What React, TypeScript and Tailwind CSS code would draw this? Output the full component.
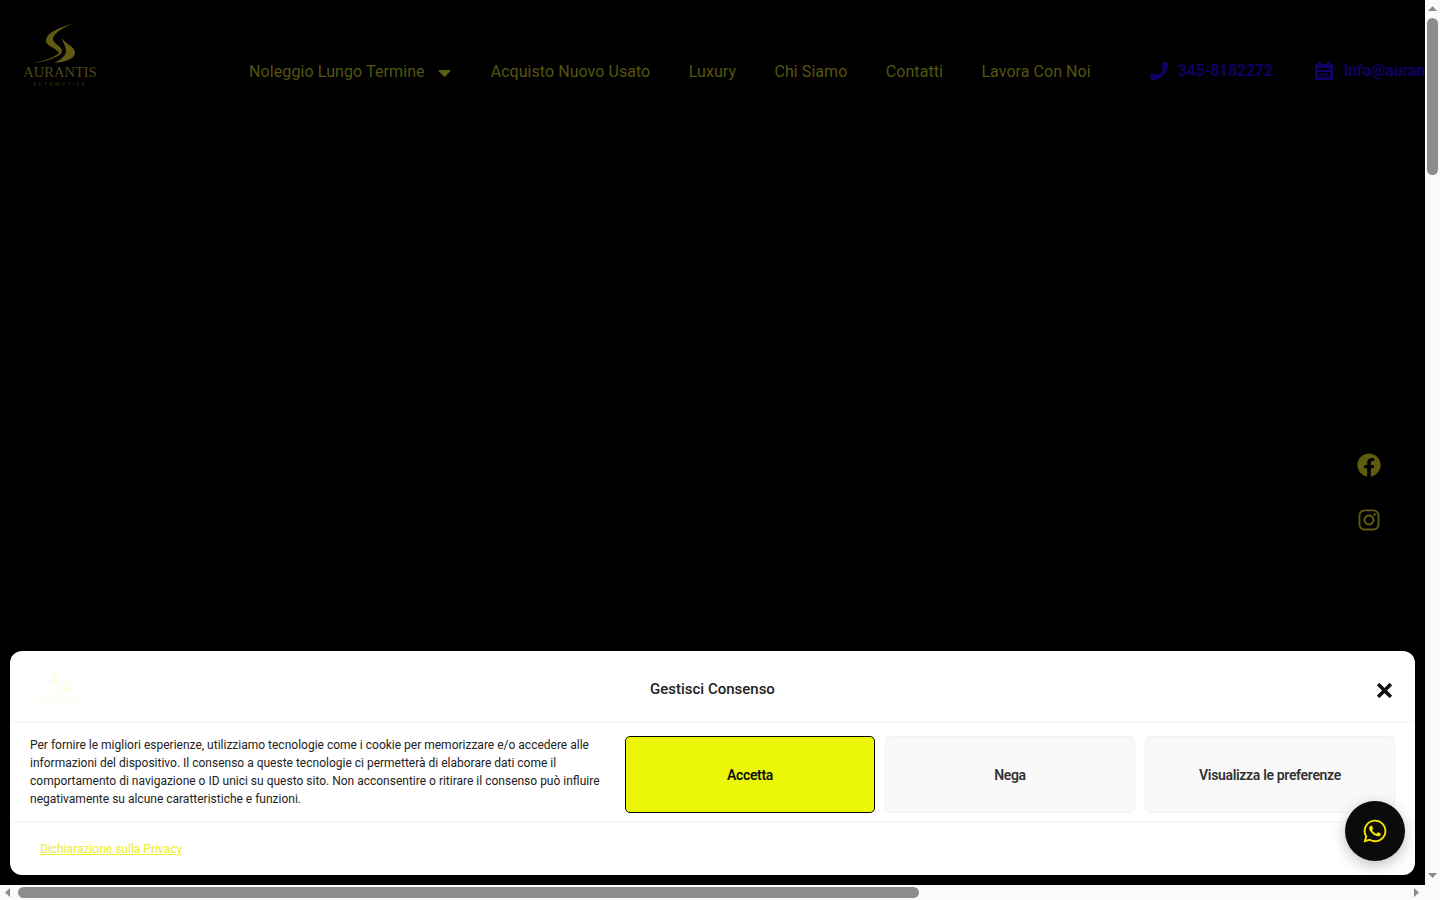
import React from "react";
import { FaCaretDown, FaFacebook, FaInstagram, FaPhoneAlt, FaWhatsapp } from "react-icons/fa";

const navItems = ["Acquisto Nuovo Usato", "Luxury", "Chi Siamo", "Contatti", "Lavora Con Noi"];

const Swoosh = ({ className }: { className: string }) => (
  <svg viewBox="0 0 44 39" className={className} fill="currentColor">
    <path d="M39 0C28 3 14 8 13 16c-1 6 11 8 13 13-6 6-18 8-26 10 10-1 26-5 29-11 1-6-10-8-9-14C21 9 30 4 39 0z" />
    <path d="M29 14c3 6 13 8 13 15-1 7-12 9-21 10 6-3 12-7 12-12 0-5-3-8-4-13z" />
  </svg>
);

const ClipboardIcon = () => (
  <svg viewBox="0 0 18 18" className="h-[18px] w-[18px]" fill="currentColor">
    <path
      fillRule="evenodd"
      d="M3 0h3v2h6V0h3v2h3v16H0V2h3zM3 6v2h12V6zm0 4v5h12v-5zm2 1.5h8v2H5z"
    />
  </svg>
);

const App = () => {
  return (
    <div className="flex h-screen w-screen flex-col overflow-hidden bg-[#fafafa] font-['Roboto',sans-serif]">
      <div className="flex min-h-0 flex-1">
        <main className="relative min-w-0 flex-1 overflow-hidden bg-black">
          <header className="flex h-[142px] items-start whitespace-nowrap">
            <div className="ml-[24px] mt-[24px] flex w-[72px] shrink-0 flex-col items-center">
              <Swoosh className="mr-[10px] h-[39px] w-[44px] text-[#5f5a14]" />
              <span className="mt-[1px] font-['Liberation_Serif',serif] text-[14.5px] leading-[16px] text-[#4d4a1e]">
                AURANTIS
              </span>
              <span className="mt-[1px] text-[5px] leading-[6px] tracking-[2.3px] text-[#3a3818]">AUTOMOTIVE</span>
            </div>
            <nav className="ml-[153px] mt-[62px] flex h-[20px] shrink-0 items-center text-[16px] tracking-[0.05px] text-[#56550f]">
              <span className="tracking-[0.1px]">Noleggio Lungo Termine</span>
              <FaCaretDown className="ml-[9px] mr-[35px] text-[#5e5d0f]" size={21} />
              <div className="ml-[1px] flex gap-[38.5px]">
                {navItems.map((item) => (
                  <span key={item}>{item}</span>
                ))}
              </div>
            </nav>
            <div className="ml-[59px] mt-[61px] flex h-[20px] shrink-0 items-center gap-[10px] text-[16px] font-semibold tracking-[-0.2px] text-[#110066]">
              <FaPhoneAlt size={18} className="-scale-x-100" />
              <span>345-8182272</span>
            </div>
            <div className="ml-[42px] mt-[61px] flex h-[20px] shrink-0 items-center gap-[11px] text-[16px] font-semibold tracking-[-0.2px] text-[#110066]">
              <ClipboardIcon />
              <span>Info@aurantisautomotive.it</span>
            </div>
          </header>
          <div className="mr-[44px] mt-[311px] flex flex-col items-end gap-[31px] text-[#5e5d0f]">
            <FaFacebook size={24} />
            <FaInstagram size={24} />
          </div>

          <section className="absolute inset-x-[10px] bottom-[10px] h-[224px] rounded-[12px] bg-white text-[#222222]">
            <div className="flex h-[72px] items-center border-b-2 border-[#f9f9f9] px-[28px] pt-[6px]">
              <div className="mt-[-6px] flex w-[44px] flex-col items-center text-[#fffde8]">
                <Swoosh className="mr-[6px] h-[28px] w-[32px]" />
                <span className="font-['Liberation_Serif',serif] text-[9px] leading-[10px]">AURANTIS</span>
              </div>
              <h2 className="ml-[568px] flex-1 text-[15px] font-medium text-[#222222]">Gestisci Consenso</h2>
              <svg viewBox="0 0 14 14" className="mr-[-5px] mt-[2px] h-[15px] w-[15px]" stroke="#111111" strokeWidth="3.4">
                <path d="M1 1l12 12M13 1L1 13" />
              </svg>
            </div>
            <div className="flex h-[100px] items-start border-b-2 border-[#f9f9f9] px-[20px] pt-[13px]">
              <p className="w-[595px] shrink-0 text-[12px] leading-[18px] text-[#222222]">
                Per fornire le migliori esperienze, utilizziamo tecnologie come i cookie per memorizzare e/o accedere alle
                informazioni del dispositivo. Il consenso a queste tecnologie ci permetterà di elaborare dati come il
                comportamento di navigazione o ID unici su questo sito. Non acconsentire o ritirare il consenso può influire
                negativamente su alcune caratteristiche e funzioni.
              </p>
              <div className="grid flex-1 grid-cols-3 gap-[10px] text-[14px] font-semibold tracking-[-0.33px]">
                <button className="h-[77px] rounded-[5px] border border-black bg-[#ebf707] pt-[1px] text-[#111111]">Accetta</button>
                <button className="h-[77px] rounded-[5px] border border-[#f2f2f2] bg-[#f9f9f9] pt-[1px] text-[#333333]">Nega</button>
                <button className="h-[77px] rounded-[5px] border border-[#f2f2f2] bg-[#f9f9f9] pt-[1px] text-[#333333]">
                  Visualizza le preferenze
                </button>
              </div>
            </div>
            <div className="flex h-[52px] items-center pl-[30px]">
              <a className="text-[12px] text-[#e9ef2a] underline">Dichiarazione sulla Privacy</a>
            </div>
          </section>

          <button className="absolute bottom-[24px] right-[20px] flex h-[60px] w-[60px] items-center justify-center rounded-full bg-[#0b0b0b] text-[#f7e600] shadow-[0_4px_14px_rgba(0,0,0,0.25)]">
            <FaWhatsapp size={26} />
          </button>
        </main>

        <aside className="flex w-[15px] shrink-0 flex-col items-center bg-[#fafafa]">
          <svg viewBox="0 0 9 5" className="mt-[6px] h-[5px] w-[9px] text-[#8a8a8a]" fill="currentColor">
            <path d="M4.5 0L9 5H0z" />
          </svg>
          <div className="mt-[7px] h-[157px] w-[11px] rounded-full bg-[#8c8c8c]" />
          <svg viewBox="0 0 9 5" className="mb-[7px] mt-auto h-[5px] w-[9px] text-[#8a8a8a]" fill="currentColor">
            <path d="M4.5 5L9 0H0z" />
          </svg>
        </aside>
      </div>

      <div className="flex h-[15px] shrink-0 items-center bg-[#fafafa]">
        <svg viewBox="0 0 5 9" className="ml-[5px] h-[9px] w-[5px] text-[#8a8a8a]" fill="currentColor">
          <path d="M0 4.5L5 0v9z" />
        </svg>
        <div className="ml-[8px] h-[11px] w-[901px] rounded-full bg-[#8c8c8c]" />
        <svg viewBox="0 0 5 9" className="ml-auto mr-[21px] h-[9px] w-[5px] text-[#8a8a8a]" fill="currentColor">
          <path d="M5 4.5L0 0v9z" />
        </svg>
      </div>
    </div>
  );
};

export default App;
